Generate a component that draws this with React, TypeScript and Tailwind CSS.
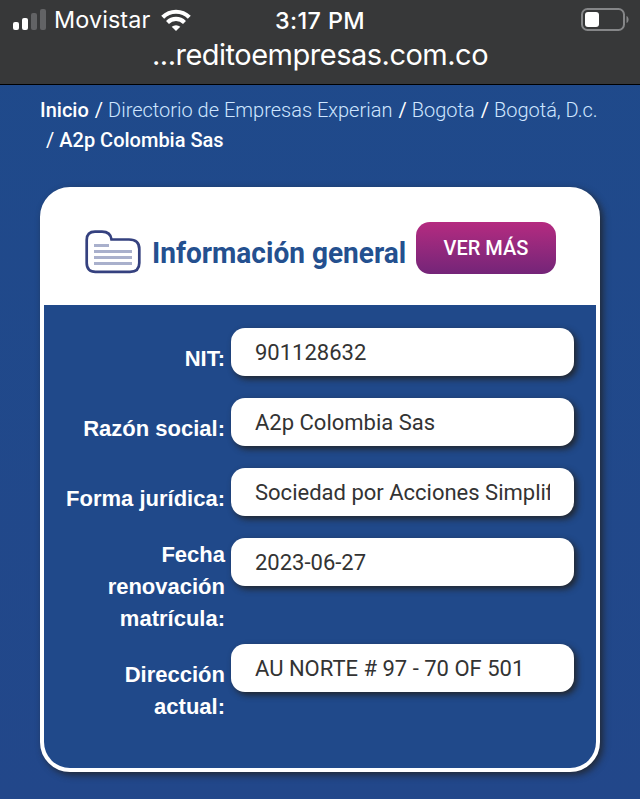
import { Fragment } from "react";

interface Field {
  label: string;
  value: string;
  labelClass?: string;
}

const crumbs = ["Directorio de Empresas Experian", "Bogota", "Bogotá, D.c."];

const fields: Field[] = [
  { label: "NIT:", value: "901128632" },
  { label: "Razón social:", value: "A2p Colombia Sas" },
  { label: "Forma jurídica:", value: "Sociedad por Acciones Simplificada" },
  { label: "Fecha renovación matrícula:", value: "2023-06-27", labelClass: "w-[140px] pt-[1px] -mb-[1px]" },
  { label: "Dirección actual:", value: "AU NORTE # 97 - 70 OF 501", labelClass: "w-[140px] pt-[15px]" },
];

function SignalIcon() {
  return (
    <svg width="34" height="22" viewBox="0 0 34 22" className="shrink-0">
      <rect x="0" y="13" width="6" height="8" rx="2" fill="#fff" />
      <rect x="9" y="9" width="6" height="12" rx="2" fill="#fff" />
      <rect x="18" y="4" width="6" height="17" rx="2" fill="#626365" />
      <rect x="27" y="0" width="6" height="21" rx="2" fill="#626365" />
    </svg>
  );
}

function WifiIcon() {
  return (
    <svg width="30" height="22" viewBox="0 0 30 22" className="shrink-0">
      <g fill="none" stroke="#fff" strokeWidth="4.2">
        <path d="M1.7 8.2 A19 19 0 0 1 28.3 8.2" />
        <path d="M6.5 13.4 A12.2 12.2 0 0 1 23.5 13.4" />
      </g>
      <path d="M15 22 L10.7 17.8 A6.5 6.5 0 0 1 19.3 17.8 Z" fill="#fff" />
    </svg>
  );
}

function BatteryIcon() {
  return (
    <svg width="49" height="24" viewBox="0 0 49 24" className="shrink-0">
      <rect x="1" y="1" width="42" height="21" rx="5.5" fill="none" stroke="#858688" strokeWidth="2" />
      <rect x="4" y="4" width="14" height="15" rx="3" fill="#fff" />
      <path d="M45.5 8 C48.3 9 48.3 14 45.5 15 Z" fill="#858688" />
    </svg>
  );
}

function FolderIcon() {
  return (
    <svg width="56" height="44" viewBox="0 0 56 44" className="shrink-0">
      <path
        d="M10 1.7 H17 Q25.5 1.7 26.5 9.5 H44 Q54.3 9.5 54.3 19 V33 Q54.3 41.8 45 41.8 H10.5 Q1.7 41.8 1.7 33 V10 Q1.7 1.7 10 1.7 Z"
        fill="#fff"
        stroke="#35417f"
        strokeWidth="2.7"
      />
      <path d="M9 15.5 H24 M9 21.5 H47 M9 27.5 H47 M9 33.5 H47" stroke="#a9b0cc" strokeWidth="2.8" />
    </svg>
  );
}

function StatusBar() {
  return (
    <header className="h-[85px] border-b border-black bg-[#373839] font-['Inter',sans-serif] text-white">
      <div className="grid h-10 grid-cols-3 items-center pl-[13px] pr-[10px]">
        <div className="flex items-center">
          <SignalIcon />
          <span className="ml-[7px] w-[107px] text-[23.4px] tracking-[0.1px]">Movistar</span>
          <WifiIcon />
        </div>
        <span className="pr-[3px] pt-[1px] text-center text-[23.4px] font-medium tracking-[0.4px]">3:17 PM</span>
        <div className="flex justify-end">
          <BatteryIcon />
        </div>
      </div>
      <p className="text-center text-[29px] leading-[29px] tracking-[-0.5px]">...reditoempresas.com.co</p>
    </header>
  );
}

function Breadcrumb() {
  return (
    <nav className="h-[102px] whitespace-nowrap pl-10 pt-[10px] text-[20px] leading-[30px] text-white">
      <div>
        <span className="font-medium">Inicio</span>
        {crumbs.map((crumb) => (
          <Fragment key={crumb}>
            <span className="ml-[6px] mr-[5px]">/</span>
            <span className="font-light text-[#cfe6ff]">{crumb}</span>
          </Fragment>
        ))}
      </div>
      <div>
        <span className="ml-[6px] mr-[5px]">/</span>
        <span className="font-medium">A2p Colombia Sas</span>
      </div>
    </nav>
  );
}

function FieldRow({ label, value, labelClass = "w-[181px] pt-[15px]" }: Field) {
  return (
    <div className="mb-[10px] flex min-h-[60px] items-start justify-end">
      <label
        className={`mr-[6px] text-right font-['Liberation_Sans',sans-serif] text-[22px] font-bold leading-8 text-white ${labelClass}`}
      >
        {label}
      </label>
      <div className="h-12 w-[343px] rounded-[14px] bg-white px-6 text-[22px] leading-[49px] text-[#333] shadow-[3px_3px_6px_rgba(34,34,34,0.9)]">
        <div className="overflow-hidden whitespace-nowrap">{value}</div>
      </div>
    </div>
  );
}

export default function App() {
  return (
    <div className="h-[799px] overflow-hidden bg-linear-to-b from-[#1f4a8b] to-[#22478a] font-['Roboto',sans-serif]">
      <StatusBar />
      <Breadcrumb />
      <section className="mx-10 h-[585px] rounded-[30px] border-4 border-white bg-white shadow-[3px_3px_7px_rgba(34,34,34,0.8)]">
        <div className="flex h-[114px] items-start pl-[41px]">
          <div className="mt-[39px]">
            <FolderIcon />
          </div>
          <h2 className="ml-[11px] mt-[42px] w-[264px] whitespace-nowrap text-[29px] font-bold leading-10 text-[#24508f]">
            <span className="inline-block origin-left scale-x-[0.967]">Información general</span>
          </h2>
          <button className="mt-[31px] h-[52px] w-[140px] rounded-[14px] bg-linear-to-b from-[#b52a80] to-[#742478] text-[20px] font-medium text-white">
            VER MÁS
          </button>
        </div>
        <div className="h-[463px] rounded-b-[26px] bg-[#20498a] pr-[22px] pt-[23px]">
          {fields.map((field) => (
            <FieldRow key={field.label} {...field} />
          ))}
        </div>
      </section>
    </div>
  );
}
